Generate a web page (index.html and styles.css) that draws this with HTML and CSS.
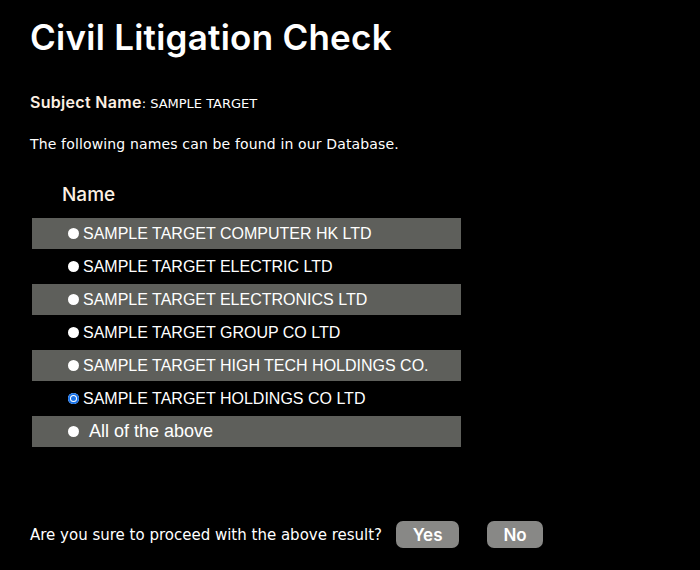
FILE: index.html
```html
<!DOCTYPE html>
<html lang="en">
<head>
    <meta charset="UTF-8">
    <meta name="viewport" content="width=device-width, initial-scale=1.0">
    <title>Civil Litigation Check</title>
    <link rel="stylesheet" href="styles.css">
</head>
<body>
    <div class="container">
        <h1>Civil Litigation Check</h1>
        <p class="subject"><span class="label">Subject Name</span>: SAMPLE TARGET</p>
        <p class="intro">The following names can be found in our Database.</p>

        <form id="nameForm">
            <div class="name-head">Name</div>
            <div class="name-list">
                <label class="row shaded"><input type="radio" name="match" value="1">SAMPLE TARGET COMPUTER HK LTD</label>
                <label class="row"><input type="radio" name="match" value="2">SAMPLE TARGET ELECTRIC LTD</label>
                <label class="row shaded"><input type="radio" name="match" value="3">SAMPLE TARGET ELECTRONICS LTD</label>
                <label class="row"><input type="radio" name="match" value="4">SAMPLE TARGET GROUP CO LTD</label>
                <label class="row shaded"><input type="radio" name="match" value="5">SAMPLE TARGET HIGH TECH HOLDINGS CO.</label>
                <label class="row"><input type="radio" name="match" value="6" checked>SAMPLE TARGET HOLDINGS CO LTD</label>
                <label class="row shaded all"><input type="radio" name="match" value="all">All of the above</label>
            </div>

            <div class="confirm">
                <span>Are you sure to proceed with the above result?</span>
                <button type="submit" class="btn yes">Yes</button>
                <button type="button" class="btn no">No</button>
            </div>
        </form>
    </div>
</body>
</html>
```

FILE: styles.css
```css
body {
    margin: 0;
    background-color: #000;
    color: #fff;
    font-family: 'DejaVu Sans', sans-serif;
}

.container {
    padding: 14px 30px 0 30px;
}

h1 {
    font-family: Inter, 'Noto Sans', sans-serif;
    font-weight: 600;
    font-size: 35px;
    margin: 0;
    line-height: 46px;
    letter-spacing: 0.25px;
}

.subject {
    margin: 33px 0 0 0;
    font-size: 13px;
    line-height: 18px;
}

.subject .label {
    font-family: Inter, sans-serif;
    font-weight: 600;
    font-size: 16px;
    color: #fdf0e3;
    letter-spacing: 0.3px;
}

.intro {
    margin: 22px 0 0 0;
    font-size: 14px;
    line-height: 18px;
    letter-spacing: 0.15px;
}

.name-head {
    font-family: Inter, sans-serif;
    font-weight: 500;
    font-size: 19px;
    color: #fdf0e3;
    margin: 31px 0 0 32px;
    line-height: 22px;
}

.name-list {
    display: flex;
    flex-direction: column;
    gap: 2px;
    width: 429px;
    margin: 12px 0 0 2px;
}

.row {
    display: flex;
    align-items: center;
    height: 31px;
    padding-left: 36px;
    font-family: 'Liberation Sans', Arial, sans-serif;
    font-size: 16px;
    cursor: pointer;
}

.row.shaded {
    background-color: #5e5f5b;
}

.row.all {
    font-size: 18px;
}

.row input {
    appearance: none;
    width: 11px;
    height: 11px;
    margin: 0 4px 0 0;
    border-radius: 50%;
    background-color: #fff;
    flex-shrink: 0;
    cursor: pointer;
}

.row.all input {
    margin-right: 10px;
}

.row input:checked {
    background-color: #1a73e8;
    box-shadow: inset 0 0 0 2px #1a73e8, inset 0 0 0 3px #fff;
}

.confirm {
    display: flex;
    align-items: center;
    margin-top: 74px;
    font-size: 15px;
}

.btn {
    height: 27px;
    border: none;
    border-radius: 7px;
    background-color: #888886;
    color: #fff;
    font-family: Inter, sans-serif;
    font-weight: 600;
    font-size: 17px;
    padding: 0;
    cursor: pointer;
}

.btn.yes {
    width: 63px;
    margin-left: 14px;
}

.btn.no {
    width: 56px;
    margin-left: 28px;
}

.btn:hover {
    background-color: #9a9a98;
}
```
